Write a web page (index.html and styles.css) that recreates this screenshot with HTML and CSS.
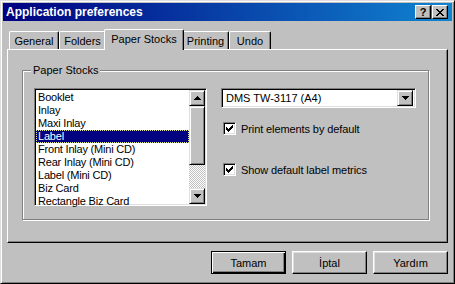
FILE: index.html
```html
<!DOCTYPE html>
<html lang="en">
<head>
  <meta charset="UTF-8" />
  <title>Application preferences</title>
  <link rel="stylesheet" href="styles.css">
</head>
<body>

  <div class="window">
    <!-- Title bar -->
    <div class="titlebar">
      <span class="title">Application preferences</span>
      <div class="caption-buttons">
        <span class="cap-btn help">?</span>
        <span class="cap-btn close">
          <svg width="8" height="7" viewBox="0 0 8 7" shape-rendering="crispEdges">
            <path d="M0 0h2v1h-2zM6 0h2v1h-2zM1 1h2v1h-2zM5 1h2v1h-2zM2 2h4v1h-4zM3 3h2v1h-2zM2 4h4v1h-4zM1 5h2v1h-2zM5 5h2v1h-2zM0 6h2v1h-2zM6 6h2v1h-2z" fill="#000"/>
          </svg>
        </span>
      </div>
    </div>

    <div class="dialog-body">
      <!-- Tabs -->
      <div class="tabs">
        <div class="tab tab-general">General</div>
        <div class="tab tab-folders">Folders</div>
        <div class="tab tab-paper active">Paper Stocks</div>
        <div class="tab tab-printing">Printing</div>
        <div class="tab tab-undo">Undo</div>
      </div>

      <div class="panel">
        <div class="group">
          <span class="group-label">Paper Stocks</span>

          <div class="listbox">
            <ul class="items">
              <li>Booklet</li>
              <li>Inlay</li>
              <li>Maxi Inlay</li>
              <li class="selected">Label</li>
              <li>Front Inlay (Mini CD)</li>
              <li>Rear Inlay (Mini CD)</li>
              <li>Label (Mini CD)</li>
              <li>Biz Card</li>
              <li>Rectangle Biz Card</li>
            </ul>
            <div class="scrollbar">
              <span class="arrow-btn">
                <svg width="7" height="4" viewBox="0 0 7 4" shape-rendering="crispEdges"><path d="M3 0h1v1h-1zM2 1h3v1h-3zM1 2h5v1h-5zM0 3h7v1h-7z" fill="#000"/></svg>
              </span>
              <span class="thumb"></span>
              <span class="track"></span>
              <span class="arrow-btn">
                <svg width="7" height="4" viewBox="0 0 7 4" shape-rendering="crispEdges"><path d="M0 0h7v1h-7zM1 1h5v1h-5zM2 2h3v1h-3zM3 3h1v1h-1z" fill="#000"/></svg>
              </span>
            </div>
          </div>

          <div class="options">
            <div class="combo">
              <span class="combo-text">DMS TW-3117 (A4)</span>
              <span class="arrow-btn">
                <svg width="7" height="4" viewBox="0 0 7 4" shape-rendering="crispEdges"><path d="M0 0h7v1h-7zM1 1h5v1h-5zM2 2h3v1h-3zM3 3h1v1h-1z" fill="#000"/></svg>
              </span>
            </div>

            <label class="check first">
              <span class="box">
                <svg width="7" height="7" viewBox="0 0 7 7" shape-rendering="crispEdges"><path d="M0 2h1v3h-1zM1 3h1v3h-1zM2 4h1v3h-1zM3 3h1v3h-1zM4 2h1v3h-1zM5 1h1v3h-1zM6 0h1v3h-1z" fill="#000"/></svg>
              </span>
              Print elements by default
            </label>

            <label class="check second">
              <span class="box">
                <svg width="7" height="7" viewBox="0 0 7 7" shape-rendering="crispEdges"><path d="M0 2h1v3h-1zM1 3h1v3h-1zM2 4h1v3h-1zM3 3h1v3h-1zM4 2h1v3h-1zM5 1h1v3h-1zM6 0h1v3h-1z" fill="#000"/></svg>
              </span>
              Show default label metrics
            </label>
          </div>
        </div>
      </div>

      <!-- Dialog buttons -->
      <div class="buttons">
        <button class="default">Tamam</button>
        <button>İptal</button>
        <button>Yardım</button>
      </div>
    </div>
  </div>

</body>
</html>
```

FILE: styles.css
```css
* {
  margin: 0;
  padding: 0;
  box-sizing: border-box;
}

body {
  background: #c0c0c0;
  font-family: 'Liberation Sans', Arial, sans-serif;
  font-size: 11px;
  color: #000;
}

.window {
  width: 455px;
  height: 284px;
  background: #c0c0c0;
  border: 1px solid;
  border-color: #dfdfdf #000 #000 #dfdfdf;
  box-shadow: inset 1px 1px #fff, inset -1px -1px #808080;
  padding: 2px;
  display: flex;
  flex-direction: column;
}

/* title bar */
.titlebar {
  height: 18px;
  background: linear-gradient(to right, #000080, #1084d0);
  display: flex;
  align-items: center;
  justify-content: space-between;
  padding: 0 4px 0 3px;
}

.title {
  color: #fff;
  font-weight: bold;
  font-size: 12px;
}

.caption-buttons {
  display: flex;
  gap: 1px;
}

.cap-btn {
  width: 16px;
  height: 14px;
  background: #c0c0c0;
  border: 1px solid;
  border-color: #fff #000 #000 #fff;
  box-shadow: inset -1px -1px #808080;
  display: flex;
  align-items: center;
  justify-content: center;
  font-weight: bold;
  font-size: 11px;
  line-height: 1;
}

/* tabs */
.dialog-body {
  flex: 1;
  padding: 8px 4px 0 4px;
  display: flex;
  flex-direction: column;
}

.tabs {
  display: flex;
  align-items: flex-end;
  height: 20px;
  padding-left: 2px;
  position: relative;
  z-index: 1;
}

.tab {
  height: 18px;
  padding-top: 3px;
  text-align: center;
  white-space: nowrap;
  background: #c0c0c0;
  border-top: 1px solid #fff;
  border-left: 1px solid #fff;
  border-right: 1px solid #000;
  box-shadow: inset -1px 0 #808080;
  border-radius: 2px 2px 0 0;
}

.tab-general { width: 50px; }
.tab-folders { width: 47px; }
.tab-paper { width: 76px; }
.tab-printing { width: 47px; }
.tab-undo { width: 42px; }

.tab.active {
  width: 80px;
  height: 21px;
  margin: 0 -2px -1px -2px;
  position: relative;
}

.panel {
  height: 194px;
  border: 1px solid;
  border-color: #fff #000 #000 #fff;
  box-shadow: inset -1px -1px #808080;
  padding: 20px 0 0 14px;
}

/* group box */
.group {
  position: relative;
  width: 407px;
  height: 150px;
  border: 1px solid #808080;
  box-shadow: inset 1px 1px #fff, 1px 1px #fff;
  padding: 17px 0 0 11px;
  display: flex;
  align-items: flex-start;
}

.group-label {
  position: absolute;
  top: -7px;
  left: 8px;
  padding: 0 2px;
  background: #c0c0c0;
  line-height: 13px;
}

/* list box */
.listbox {
  width: 173px;
  height: 118px;
  background: #fff;
  border: 1px solid;
  border-color: #808080 #fff #fff #808080;
  box-shadow: inset 1px 1px #000, inset -1px -1px #dfdfdf;
  padding: 1px;
  display: flex;
}

.items {
  list-style: none;
  flex: 1;
  padding-top: 1px;
}

.items li {
  height: 13px;
  line-height: 13px;
  padding-left: 2px;
  white-space: nowrap;
  letter-spacing: -0.2px;
}

.items li.selected {
  background: #000080;
  color: #fff;
  outline: 1px dotted #e8e890;
  outline-offset: -1px;
}

.scrollbar {
  width: 16px;
  display: flex;
  flex-direction: column;
}

.arrow-btn {
  width: 16px;
  height: 16px;
  background: #c0c0c0;
  border: 1px solid;
  border-color: #dfdfdf #000 #000 #dfdfdf;
  box-shadow: inset 1px 1px #fff, inset -1px -1px #808080;
  display: flex;
  align-items: center;
  justify-content: center;
  flex: none;
}

.thumb {
  height: 59px;
  background: #c0c0c0;
  border: 1px solid;
  border-color: #dfdfdf #000 #000 #dfdfdf;
  box-shadow: inset 1px 1px #fff, inset -1px -1px #808080;
}

.track {
  flex: 1;
  background: repeating-conic-gradient(#fff 0 25%, #c0c0c0 0 50%) 0 0 / 2px 2px;
}

/* right column */
.options {
  width: 195px;
  margin-left: 14px;
  display: flex;
  flex-direction: column;
}

.combo {
  height: 20px;
  background: #fff;
  border: 1px solid;
  border-color: #808080 #fff #fff #808080;
  box-shadow: inset 1px 1px #000, inset -1px -1px #dfdfdf;
  padding: 1px 2px 1px 1px;
  display: flex;
  align-items: center;
}

.combo-text {
  flex: 1;
  padding-left: 3px;
}

.check {
  display: flex;
  align-items: center;
  gap: 5px;
  margin-left: 2px;
  height: 13px;
  letter-spacing: -0.1px;
}

.check.first {
  margin-top: 14px;
}

.check.second {
  margin-top: 28px;
}

.box {
  width: 13px;
  height: 13px;
  background: #fff;
  border: 1px solid;
  border-color: #808080 #fff #fff #808080;
  box-shadow: inset 1px 1px #000, inset -1px -1px #dfdfdf;
  display: flex;
  align-items: center;
  justify-content: center;
}

/* dialog buttons */
.buttons {
  display: flex;
  justify-content: flex-end;
  gap: 6px;
  margin-top: 8px;
}

.buttons button {
  width: 75px;
  height: 23px;
  font-family: 'Liberation Sans', Arial, sans-serif;
  font-size: 11px;
  color: #000;
  background: #c0c0c0;
  border: 1px solid;
  border-color: #fff #000 #000 #fff;
  box-shadow: inset -1px -1px #808080, inset 1px 1px #dfdfdf;
}

.buttons button.default {
  border: 1px solid #000;
  box-shadow: inset 1px 1px #fff, inset -1px -1px #000, inset -2px -2px #808080;
}
```
